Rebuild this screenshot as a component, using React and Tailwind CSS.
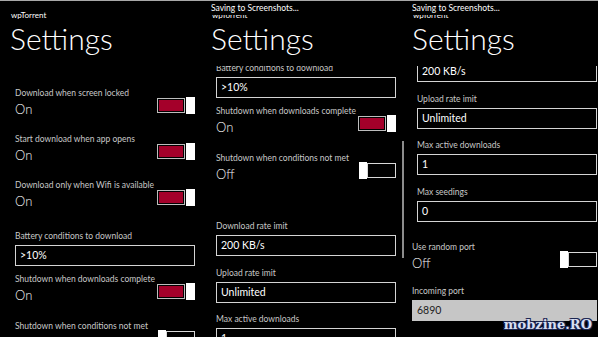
import React from "react";

const items = [
  { type: "toggle", label: "Download when screen locked", on: true, mt: "mt-[21px]" },
  { type: "toggle", label: "Start download when app opens", on: true, mt: "mt-[15px]" },
  { type: "toggle", label: "Download only when Wifi is available", on: true, mt: "mt-[15px]" },
  { type: "input", label: "Battery conditions to download", value: ">10%", mt: "mt-[20px]" },
  { type: "toggle", label: "Shutdown when downloads complete", on: true, mt: "mt-[7px]" },
  { type: "toggle", label: "Shutdown when conditions not met", on: false, mt: "mt-[16px]" },
  { type: "input", label: "Download rate imit", value: "200 KB/s", mt: "mt-[37px]" },
  { type: "input", label: "Upload rate imit", value: "Unlimited", mt: "mt-[11px]" },
  { type: "input", label: "Max active downloads", value: "1", mt: "mt-[10px]" },
  { type: "input", label: "Max seedings", value: "0", mt: "mt-[11px]" },
  { type: "toggle", label: "Use random port", on: false, mt: "mt-[19px]" },
  { type: "input", label: "Incoming port", value: "6890", mt: "mt-[13px]", filled: true },
];

function Toggle({ on }) {
  if (on) {
    return (
      <div className="mt-[10px] flex shrink-0 items-center">
        <div className="h-[15px] w-[28px] border border-[#bdbdbd] bg-black p-[1px]">
          <div className="h-full w-full bg-[#a4002a]" />
        </div>
        <div className="ml-[1px] h-[17px] w-[9px] bg-white" />
      </div>
    );
  }
  return (
    <div className="mt-[10px] flex shrink-0 items-center">
      <div className="h-[17px] w-[8px] bg-white" />
      <div className="h-[15px] w-[29px] border-[1.5px] border-[#d8d8d8] bg-black" />
    </div>
  );
}

function Label({ children }) {
  return (
    <div className="whitespace-nowrap text-[8.5px] leading-[12px] text-[#c8c8c8]">{children}</div>
  );
}

function Item({ item, shifted }) {
  const shift = shifted ? "-ml-[5px]" : "";
  if (item.type === "toggle") {
    return (
      <div className={`${item.mt} ${shift} flex items-start justify-between`}>
        <div className="flex flex-col">
          <Label>{item.label}</Label>
          <div className="mt-[1px] text-[13px] font-light leading-[18px] text-[#f2f2f2]">
            {item.on ? "On" : "Off"}
          </div>
        </div>
        <Toggle on={item.on} />
      </div>
    );
  }
  return (
    <div className={`${item.mt} ${shift} flex flex-col`}>
      <Label>{item.label}</Label>
      {item.filled ? (
        <div className="mt-[3px] flex h-[21px] items-center bg-[#c6c6c6] px-[5px] text-[10.5px] text-[#222]">
          {item.value}
        </div>
      ) : (
        <div className="mt-[3px] flex h-[21px] items-center border-[1.5px] border-[#d4d4d4] bg-black px-[4px] text-[10.5px] text-white">
          {item.value}
        </div>
      )}
    </div>
  );
}

function Panel({ width, offset, saving, shiftFrom, scrollbar }) {
  return (
    <div className={`relative flex h-full shrink-0 flex-col overflow-hidden ${width}`}>
      <div className="relative h-[65px] shrink-0 pt-[9px]">
        <div className="pl-[11px] text-[8px] leading-[10px] text-white">wpTorrent</div>
        <div className="pl-[10px] text-[30px] font-light leading-[36px] text-white">Settings</div>
        {saving && (
          <div className="absolute left-0 right-0 top-0 h-[13.5px] bg-black pl-[10px] pt-[2px] text-[8.5px] leading-[10px] text-white">
            Saving to Screenshots...
          </div>
        )}
      </div>
      <div className="min-h-0 flex-1 overflow-hidden">
        <div className={`flex w-[201px] flex-col pl-[15px] pr-[6px] ${offset}`}>
          {items.map((it, i) => (
            <Item key={i} item={it} shifted={shiftFrom !== undefined && i >= shiftFrom} />
          ))}
        </div>
      </div>
      {scrollbar && <div className="absolute left-0 top-[140px] h-[117px] w-[1.5px] bg-[#8c8c8c]" />}
    </div>
  );
}

export default function App() {
  return (
    <div className="relative flex h-[337px] w-[598px] overflow-hidden border-t border-[#a8a8a8] bg-black font-['Lato',sans-serif]">
      <Panel width="w-[201px]" offset="mt-0" />
      <Panel width="w-[201px]" offset="-mt-[168px]" saving />
      <Panel width="w-[196px]" offset="-mt-[342px]" saving shiftFrom={10} scrollbar />
      <div className="absolute bottom-[5px] right-[6px] font-['DejaVu_Serif',serif] text-[13px] font-bold leading-[14px] text-[#d6def2] [text-shadow:1px_1px_0_#1b2550,-1px_-1px_0_#1b2550,1px_-1px_0_#1b2550,-1px_1px_0_#1b2550]">
        mobzine.RO
      </div>
    </div>
  );
}
